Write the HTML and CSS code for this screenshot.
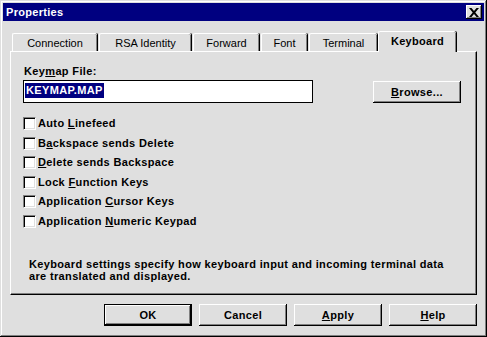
FILE: index.html
```html
<!DOCTYPE html>
<html lang="en">
<head>
    <meta charset="UTF-8">
    <title>Properties</title>
    <link rel="stylesheet" href="styles.css">
</head>
<body>
    <div class="window">
        <div class="titlebar">
            <span class="title">Properties</span>
            <span class="close">
                <svg width="10" height="9" viewBox="0 0 10 9"><path d="M0 0h2.5l2.5 3 2.5-3H10L6.3 4.5 10 9H7.5L5 6 2.5 9H0l3.7-4.5z" fill="#000"/></svg>
            </span>
        </div>
        <div class="content">
            <div class="tabs">
                <div class="tab tab-connection">Connection</div>
                <div class="tab tab-rsa">RSA Identity</div>
                <div class="tab tab-forward">Forward</div>
                <div class="tab tab-font">Font</div>
                <div class="tab tab-terminal">Terminal</div>
                <div class="tab tab-keyboard active">Keyboard</div>
            </div>
            <div class="panel">
                <label class="field-label">Key<u>m</u>ap File:</label>
                <div class="file-row">
                    <div class="textbox"><span class="selected">KEYMAP.MAP</span></div>
                    <div class="button browse"><span><u>B</u>rowse...</span></div>
                </div>
                <div class="checks">
                    <div class="check"><span class="box"></span><span>Auto <u>L</u>inefeed</span></div>
                    <div class="check"><span class="box"></span><span>B<u>a</u>ckspace sends Delete</span></div>
                    <div class="check"><span class="box"></span><span><u>D</u>elete sends Backspace</span></div>
                    <div class="check"><span class="box"></span><span>Lock <u>F</u>unction Keys</span></div>
                    <div class="check"><span class="box"></span><span>Application <u>C</u>ursor Keys</span></div>
                    <div class="check"><span class="box"></span><span>Application <u>N</u>umeric Keypad</span></div>
                </div>
                <p class="description">Keyboard settings specify how keyboard input and incoming terminal data are translated and displayed.</p>
            </div>
            <div class="actions">
                <div class="button default"><span>OK</span></div>
                <div class="button"><span>Cancel</span></div>
                <div class="button"><span><u>A</u>pply</span></div>
                <div class="button"><span><u>H</u>elp</span></div>
            </div>
        </div>
    </div>
</body>
</html>
```
FILE: styles.css
```css
body {
    margin: 0;
    background-color: #dfdfdf;
    font-family: "Liberation Sans", Arial, sans-serif;
    font-size: 11px;
    color: #000;
}
.window {
    width: 487px;
    height: 337px;
    box-sizing: border-box;
    padding: 3px;
    background-color: #dfdfdf;
    box-shadow: inset -1px -1px 0 #000, inset 1px 1px 0 #dfdfdf, inset -2px -2px 0 #808080, inset 2px 2px 0 #fff;
}
.titlebar {
    height: 18px;
    background-color: #000080;
    display: flex;
    align-items: center;
    justify-content: space-between;
    padding: 0 2px 0 3px;
}
.title {
    color: #fff;
    font-weight: bold;
    font-size: 11px;
    letter-spacing: 0.3px;
}
.close {
    width: 16px;
    height: 14px;
    box-sizing: border-box;
    background-color: #dfdfdf;
    display: flex;
    align-items: center;
    justify-content: center;
    box-shadow: inset -1px -1px 0 #000, inset 1px 1px 0 #fff, inset -2px -2px 0 #808080;
}
.content {
    padding: 10px 7px 0 7px;
}
.tabs {
    display: flex;
    align-items: flex-end;
    height: 20px;
    padding-left: 2px;
    position: relative;
    z-index: 1;
}
.tab {
    height: 18px;
    box-sizing: border-box;
    display: flex;
    align-items: center;
    justify-content: center;
    padding-top: 1px;
    border-top: 1px solid #fff;
    border-left: 1px solid #fff;
    border-radius: 2px 2px 0 0;
    box-shadow: inset -1px 0 0 #808080, 1px 0 0 #000;
    margin-right: 2px;
}
.tab-connection { width: 85px; }
.tab-rsa { width: 92px; }
.tab-forward { width: 66px; }
.tab-font { width: 46px; }
.tab-terminal { width: 68px; }
.tab-keyboard { width: 78px; }
.tab.active {
    height: 21px;
    margin-left: -1px;
    margin-bottom: -1px;
    font-weight: bold;
    letter-spacing: 0.3px;
    background-color: #dfdfdf;
    padding-top: 0;
    padding-bottom: 2px;
}
.panel {
    height: 244px;
    box-sizing: border-box;
    border-top: 1px solid #fff;
    border-left: 1px solid #fff;
    border-right: 1px solid #000;
    border-bottom: 1px solid #000;
    box-shadow: inset -1px -1px 0 #808080;
    padding: 12px 14px 0 12px;
    font-weight: bold;
    letter-spacing: 0.35px;
}
.field-label {
    display: block;
    height: 14px;
    line-height: 14px;
    margin-left: 1px;
}
.file-row {
    display: flex;
    align-items: center;
    margin-top: 2px;
}
.textbox {
    width: 290px;
    height: 23px;
    box-sizing: border-box;
    border: 1px solid #000;
    background-color: #fff;
    padding: 2px 1px;
}
.selected {
    display: inline-block;
    background-color: #000080;
    color: #fff;
    height: 15px;
    line-height: 15px;
    padding: 0 1px;
}
.button {
    width: 88px;
    height: 22px;
    box-sizing: border-box;
    display: flex;
    align-items: center;
    justify-content: center;
    font-weight: bold;
    letter-spacing: 0.35px;
    background-color: #dfdfdf;
    box-shadow: inset -1px -1px 0 #000, inset 1px 1px 0 #fff, inset -2px -2px 0 #808080;
}
.browse {
    margin-left: 60px;
    margin-top: 1px;
}
.checks {
    margin-top: 14px;
    display: flex;
    flex-direction: column;
    gap: 6px;
}
.check {
    display: flex;
    align-items: center;
    height: 13.5px;
    line-height: 13px;
}
.box {
    width: 13px;
    height: 13px;
    box-sizing: border-box;
    background-color: #fff;
    margin-right: 2px;
    border-top: 1px solid #808080;
    border-left: 1px solid #808080;
    border-right: 1px solid #fff;
    border-bottom: 1px solid #fff;
    box-shadow: inset 1px 1px 0 #000, inset -1px -1px 0 #dfdfdf;
}
.description {
    margin: 30px 0 0 6px;
    line-height: 12px;
    width: 430px;
}
.actions {
    display: flex;
    justify-content: flex-end;
    gap: 7px;
    margin-top: 9px;
}
.button.default {
    box-shadow: inset 0 0 0 1px #000, inset -2px -2px 0 #000, inset 2px 2px 0 #fff, inset -3px -3px 0 #808080;
}
```
